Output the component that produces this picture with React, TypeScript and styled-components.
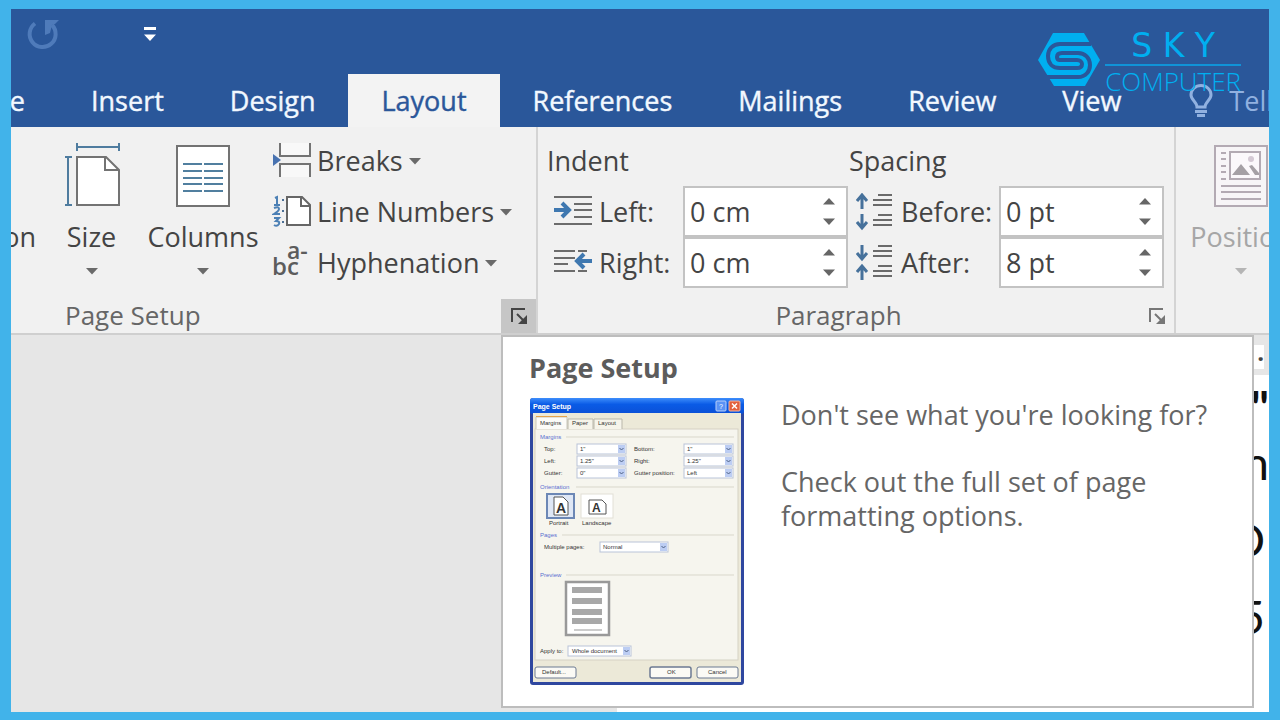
import React from "react";
import styled, { createGlobalStyle } from "styled-components";

const Global = createGlobalStyle`
  * { box-sizing: border-box; }
  body { margin: 0; font-family: "Open Sans", "Noto Sans", sans-serif; color: #444; }
  button, input { font: inherit; color: inherit; }
  button { border: 0; padding: 0; background: none; cursor: pointer; }
  h1, h2, h3, p { margin: 0; font-weight: 400; }
`;

const Frame = styled.div`
  position: relative;
  display: flex;
  flex-direction: column;
  min-height: 100vh;
  border: solid #41b3ea;
  border-width: 9px 11px 8px;
  overflow: hidden;
  background: #e6e6e6;
`;

const TitleBar = styled.header`
  display: flex;
  align-items: center;
  gap: 83px;
  height: 65px;
  padding: 0 0 16px 15px;
  background: #2a579a;
`;

const IconButton = styled.button`
  display: flex;
  align-items: center;
`;

const TabBar = styled.nav`
  display: flex;
  height: 53px;
  background: #2a579a;
  overflow: hidden;
`;

const Tab = styled.button<{ $active?: boolean }>`
  flex: none;
  padding: 0 33px;
  font-size: 27px;
  line-height: 53px;
  color: ${(p) => (p.$active ? "#2b579a" : "#f2f8ff")};
  background: ${(p) => (p.$active ? "#f3f3f3" : "transparent")};
  -webkit-text-stroke: 0.4px currentColor;
`;

const CutTab = styled(Tab)`
  display: flex;
  justify-content: flex-end;
  width: 47px;
  padding-left: 0;
  overflow: hidden;
`;

const TellMe = styled.button`
  display: flex;
  flex: none;
  align-items: center;
  gap: 15px;
  padding-left: 34px;
  font-size: 27px;
  white-space: nowrap;
  color: #91b1e0;
`;

const Brand = styled.a`
  position: absolute;
  top: 15px;
  right: 28px;
  display: flex;
  align-items: center;
  gap: 4px;
  color: #00aff0;
  text-decoration: none;
`;

const BrandWords = styled.span`
  display: flex;
  flex-direction: column;
  align-items: center;
`;

const BrandTop = styled.span`
  padding-top: 4px;
  font-family: "DejaVu Sans", sans-serif;
  font-size: 33px;
  line-height: 36px;
`;

const BrandBottom = styled.span`
  border-top: 2px solid #1093d8;
  font-weight: 300;
  font-size: 26px;
  line-height: 30px;
`;

const Ribbon = styled.section`
  position: relative;
  z-index: 1;
  display: flex;
  height: 208px;
  background: #f1f1f1;
  border-bottom: 2px solid #cfcfcf;
`;

const Group = styled.div`
  display: flex;
  flex-direction: column;
  flex: none;
  padding-top: 8px;
  border-right: 2px solid #d4d4d4;
`;

const LastGroup = styled(Group)`
  flex: 1 1 0;
  min-width: 0;
  border-right: 0;
  overflow: hidden;
`;

const GroupBody = styled.div`
  display: flex;
  height: 153px;
`;

const ParagraphBody = styled(GroupBody)`
  padding: 0 10px 0 9px;
  column-gap: 1px;
`;

const GroupFooter = styled.div`
  display: flex;
  flex: 1;
  align-items: flex-end;
  justify-content: flex-end;
`;

const GroupLabel = styled.h2<{ $center?: boolean }>`
  flex: 1;
  font-size: 26px;
  line-height: 36px;
  padding-left: ${(p) => (p.$center ? "0" : "54px")};
  text-align: ${(p) => (p.$center ? "center" : "left")};
  color: #666;
`;

const Launcher = styled.button<{ $hot?: boolean }>`
  display: flex;
  align-items: center;
  justify-content: center;
  width: 35px;
  height: 34px;
  color: ${(p) => (p.$hot ? "#444" : "#777")};
  background: ${(p) => (p.$hot ? "#c6c6c6" : "transparent")};
`;

const BigButton = styled.button<{ $width: number; $dim?: boolean }>`
  display: flex;
  flex: none;
  flex-direction: column;
  align-items: center;
  width: ${(p) => p.$width}px;
  padding-top: 8px;
  font-size: 27px;
  line-height: 36px;
  color: ${(p) => (p.$dim ? "#a6a6a6" : "#444")};

  svg:first-child { margin-bottom: 12px; }
  svg:last-child { margin-top: 12px; }
`;

const CutButton = styled.button`
  display: flex;
  flex: none;
  align-items: flex-end;
  justify-content: flex-end;
  width: 25px;
  height: 120px;
  overflow: hidden;
  font-size: 27px;
  line-height: 36px;
`;

const SmallStack = styled.div`
  display: flex;
  flex-direction: column;
  flex: none;
  width: 277px;
  padding-left: 13px;
`;

const SmallButton = styled.button`
  display: flex;
  align-items: center;
  gap: 5px;
  height: 51px;
  font-size: 27px;
  white-space: nowrap;
`;

const Fields = styled.div<{ $label: number }>`
  display: grid;
  grid-template-columns: 38px ${(p) => p.$label}px 165px;
  grid-auto-rows: 51px;
  column-gap: 7px;
  align-items: center;
  padding-left: 7px;
  font-size: 27px;
`;

const FieldsTitle = styled.h3`
  grid-column: 1 / -1;
  margin-left: -7px;
  font-size: 27px;
`;

const SpinBox = styled.div`
  display: flex;
  height: 51px;
  border: 2px solid #c3c3c3;
  background: #fff;

  input {
    flex: 1;
    min-width: 0;
    border: 0;
    padding: 0 0 0 5px;
    background: none;
    outline: 0;
  }
`;

const Spinners = styled.div`
  display: flex;
  flex-direction: column;
  justify-content: space-evenly;
  width: 34px;
  color: #666;

  button { display: flex; justify-content: center; padding: 4px 0; }
`;

const Workspace = styled.main`
  display: flex;
  flex: 1;
  padding-left: 606px;
`;

const PageColumn = styled.div`
  flex: 1;
  min-width: 0;
  padding-top: 10px;
`;

const Ruler = styled.div`
  height: 24px;
  margin-right: 5px;
  background: #fff;
  text-align: right;
  font-size: 24px;
  line-height: 26px;
  font-weight: 700;
`;

const Page = styled.article`
  height: calc(100% - 30px);
  margin-top: 6px;
  padding-top: 14px;
  background: #fff;
  color: #111;
  font-family: Lato, "Open Sans", sans-serif;
  font-size: 46px;
  text-align: right;
  overflow: hidden;
`;

const PageLine = styled.p<{ $first?: boolean; $inset?: boolean }>`
  line-height: ${(p) => (p.$first ? "35px" : "77px")};
  font-weight: ${(p) => (p.$first ? 700 : 400)};
  padding-right: ${(p) => (p.$inset ? "4px" : "0")};
  white-space: nowrap;
`;

const Tooltip = styled.div`
  position: absolute;
  top: 100%;
  left: 490px;
  width: 753px;
  height: 373px;
  margin-top: 2px;
  padding: 11px 26px;
  border: 2px solid #bdbdbd;
  background: #fff;
  color: #666;
  font-size: 27px;
`;

const TooltipTitle = styled.h2`
  font-size: 27px;
  font-weight: 700;
  line-height: 40px;
  color: #5c5c5c;
`;

const TooltipBody = styled.div`
  display: flex;
  gap: 37px;
  padding: 10px 0 0 1px;
`;

const TooltipText = styled.div`
  display: flex;
  flex-direction: column;
  gap: 33px;
  line-height: 34px;
`;

const Caret = ({ color = "#6a6a6a" }: { color?: string }) => (
  <svg width="14" height="8" viewBox="0 0 14 8" aria-hidden="true">
    <path d="M1 1h12L7 7.500z" fill={color} />
  </svg>
);

const SpinArrow = ({ up }: { up?: boolean }) => (
  <svg width="14" height="8" viewBox="0 0 14 8" aria-hidden="true">
    <path d={up ? "M1 7.500h12L7 1z" : "M1 .5h12L7 7z"} fill="#666" />
  </svg>
);

const RepeatIcon = () => (
  <svg width="34" height="32" viewBox="0 0 34 32" fill="none" stroke="#4f7bba" strokeWidth="4" aria-hidden="true">
    <path d="M9 5.500A13 13 0 1 0 26 7" />
    <path d="M19 2h14l-4 4-3 1-2 8-5 2z" fill="#4f7bba" stroke="none" />
  </svg>
);

const CustomizeIcon = () => (
  <svg width="14" height="16" viewBox="0 0 14 16" fill="#fff" aria-hidden="true">
    <path d="M1 1h12v3H1zM1 8.500h12L7 15z" />
  </svg>
);

const BulbIcon = () => (
  <svg width="26" height="34" viewBox="0 0 26 34" fill="none" stroke="#91b1e0" strokeWidth="3" aria-hidden="true">
    <path d="M9 23c0-5-6-7-6-12a10 9.500 0 0 1 20 0c0 5-6 7-6 12z" />
    <path d="M7 27.500h12M9 31.500h8" />
  </svg>
);

const BrandMark = () => (
  <svg width="64" height="56" viewBox="0 0 64 56" aria-hidden="true">
    <path d="M16 1h31l16 27-15 26H17L1 28z" fill="#00aff0" />
    <g fill="none" stroke="#2a579a" strokeWidth="4">
      <path d="M54 12H23c-7 0-12 5-12 12 0 8 5 12 12 12h17c3 0 5-1 5-4 0-2-2-4-5-4H22" />
      <path d="M8 45h33c8 0 12-6 12-12 0-7-5-12-12-12H25c-3 0-5 1-5 4 0 2 1 3 3 3" />
    </g>
  </svg>
);

const SizeIcon = () => (
  <svg width="56" height="64" viewBox="0 0 56 64" fill="none" aria-hidden="true">
    <g stroke="#4f7c9f" strokeWidth="2">
      <path d="M13 4h42M13 0v8M55 0v8M4 14v48M1 14h7M1 62h7" />
    </g>
    <path d="M13 14h29l13 13v35H13z" fill="#fff" stroke="#737373" strokeWidth="2" />
    <path d="M41 14v13h14" stroke="#737373" strokeWidth="2" />
  </svg>
);

const ColumnsIcon = () => (
  <svg width="54" height="64" viewBox="0 0 54 64" fill="none" aria-hidden="true">
    <path d="M1 3h52v60H1z" fill="#fff" stroke="#737373" strokeWidth="2" />
    <path
      d="M7 21h19M28 21h19M7 28h19M28 28h19M7 35h19M28 35h19M7 41h19M28 41h19M7 48h19M28 48h19"
      stroke="#517f9f"
      strokeWidth="2"
    />
  </svg>
);

const PositionIcon = () => (
  <svg width="54" height="64" viewBox="0 0 54 64" fill="none" stroke="#b3aab3" aria-hidden="true">
    <path d="M1 3h52v60H1z" fill="#f7f5f7" strokeWidth="2" />
    <path d="M16 9h30v27H16z" strokeWidth="2" fill="#fbf8fb" />
    <path d="M7 10h5M7 16h5M7 23h5M7 29h5M7 36h5M7 43h40M7 49h40M7 56h40" strokeWidth="2" />
    <path d="M18 32l9-11 9 11zM35 23l3-1 7 8v2h-4z" fill="#a5a0a5" stroke="none" />
    <circle cx="37" cy="16" r="3" fill="#d4c9d4" stroke="none" />
  </svg>
);

const BreaksIcon = () => (
  <svg width="40" height="36" viewBox="0 0 40 36" fill="none" aria-hidden="true">
    <path d="M8 0v13h30V0M8 34V21h30v13" fill="#f8f8f8" stroke="#737373" strokeWidth="2" />
    <path d="M1 11l8 6-8 6z" fill="#4872b0" />
  </svg>
);

const LineNumbersIcon = () => (
  <svg width="40" height="34" viewBox="0 0 40 34" fill="none" aria-hidden="true">
    <path d="M15 2h15l8 8v20H15z" fill="#fff" stroke="#666" strokeWidth="2" />
    <path d="M29 2v9h9" stroke="#666" strokeWidth="2" />
    <path d="M3 3l2-1v8M2 10h6M2 13q5-2 5 1 0 2-5 5h6M2 23h5l-3 3q4 0 3 3-2 3-5 1" stroke="#4c80b5" strokeWidth="2" />
    <path d="M10 5h2M10 16h2M10 27h2" stroke="#4c6f95" strokeWidth="2" />
  </svg>
);

const HyphenationIcon = () => (
  <svg width="40" height="36" viewBox="0 0 40 36" fill="#5c5c5c" aria-hidden="true">
    <g fontFamily="Open Sans, sans-serif" fontWeight="600">
      <text x="0" y="30" fontSize="24">bc</text>
      <text x="15" y="14" fontSize="23">a-</text>
    </g>
  </svg>
);

const IndentIcon = ({ right }: { right?: boolean }) => (
  <svg width="38" height="32" viewBox="0 0 38 32" fill="none" aria-hidden="true">
    {right ? (
      <>
        <path d="M0 4h21M24 4h9M0 11h21M0 17h14M0 24h21M24 24h9" stroke="#6c6c6c" strokeWidth="2" />
        <path d="M38 14H24M30 7l-7 7 7 7" stroke="#3f78b0" strokeWidth="4" />
      </>
    ) : (
      <>
        <path d="M0 1h38M20 8h18M20 14h18M20 21h18M0 28h38" stroke="#6c6c6c" strokeWidth="2" />
        <path d="M0 14h14M8 7l7 7-7 7" stroke="#3f78b0" strokeWidth="4" />
      </>
    )}
  </svg>
);

const SpacingIcon = ({ after }: { after?: boolean }) => (
  <svg width="38" height="38" viewBox="0 0 38 38" fill="none" aria-hidden="true">
    <path d="M22 2h14M17 7h19M17 12h19M22 22h14M17 27h19M17 32h19" stroke="#6a6a6a" strokeWidth="2" />
    <path
      d={
        after
          ? "M6 1v14M1 9l5 6 5-6M6 36V22M1 28l5-6 5 6"
          : "M6 16V2M1 8l5-6 5 6M6 21v14M1 29l5 6 5-6"
      }
      stroke="#46719b"
      strokeWidth="3"
    />
  </svg>
);

const LauncherIcon = () => (
  <svg width="18" height="18" viewBox="0 0 18 18" fill="none" stroke="currentColor" strokeWidth="2" aria-hidden="true">
    <path d="M2 15V2h13M7 7l7 7" />
    <path d="M17 8v9H8z" fill="currentColor" stroke="none" />
  </svg>
);

const thumbLabels: [number, number, string][] = [
  [10, 27, "Margins"], [42, 27, "Paper"], [68, 27, "Layout"],
  [14, 53, "Top:"], [14, 65, "Left:"], [14, 77, "Gutter:"],
  [104, 53, "Bottom:"], [104, 65, "Right:"], [104, 77, "Gutter position:"],
  [50, 53, "1\""], [50, 65, "1.25\""], [50, 77, "0\""],
  [157, 53, "1\""], [157, 65, "1.25\""], [157, 77, "Left"],
  [19, 127, "Portrait"], [52, 127, "Landscape"],
  [14, 151, "Multiple pages:"], [73, 151, "Normal"],
  [10, 255, "Apply to:"], [42, 255, "Whole document"],
  [12, 276, "Default..."], [137, 276, "OK"], [178, 276, "Cancel"],
];

const thumbHeads: [number, number, string, number][] = [
  [10, 41, "Margins", 36], [10, 91, "Orientation", 46], [10, 139, "Pages", 32], [10, 179, "Preview", 36],
];

const thumbBoxes: [number, number, number][] = [
  [47, 46, 49], [47, 58, 49], [47, 70, 49], [154, 46, 49], [154, 58, 49], [154, 70, 49], [70, 144, 68], [38, 248, 63],
];

const DialogPicture = () => (
  <svg width="214" height="287" viewBox="0 0 214 287" role="img" aria-label="Page Setup dialog">
    <defs>
      <linearGradient id="bar" x1="0" y1="0" x2="0" y2="1">
        <stop offset="0" stopColor="#3d8dfb" />
        <stop offset="0.400" stopColor="#0a5be6" />
        <stop offset="1" stopColor="#0b50d6" />
      </linearGradient>
    </defs>
    <rect width="214" height="287" rx="3" fill="#2f479f" />
    <rect width="214" height="16" rx="3" fill="url(#bar)" />
    <rect x="3" y="15" width="208" height="269" fill="#ece9d8" />
    <rect x="5" y="31" width="203" height="231" fill="#f6f5ee" stroke="#d5d2c4" />
    <path d="M6 31V19h31v12" fill="#fcfbf7" stroke="#c9c7ba" />
    <path d="M6 18.500h31" stroke="#e5a34b" />
    <path d="M38 31V21h25v10M64 31V21h28v10" fill="#f6f4ea" stroke="#b9b7aa" />
    <rect x="186" y="3" width="10" height="10" rx="1" fill="#5b93f5" stroke="#b9d0fa" />
    <rect x="199" y="3" width="11" height="10" rx="1" fill="#e2603d" stroke="#f2b9a6" />
    <path d="M202 5.500l5 5M207 5.500l-5 5" stroke="#fff" strokeWidth="1.500" />
    <g fontFamily="Liberation Sans, sans-serif" fontSize="7">
      <text x="3" y="11" fill="#fff" fontWeight="700">Page Setup</text>
      <text x="189" y="11" fill="#fff">?</text>
      {thumbHeads.map(([x, y, t, w]) => (
        <g key={t}>
          <text x={x} y={y} fill="#5a6fd0" fontSize="6">{t}</text>
          <path d={`M${w} ${y - 2}H204`} stroke="#d9d7cb" />
        </g>
      ))}
      {thumbBoxes.map(([x, y, w]) => (
        <g key={`${x}-${y}`}>
          <rect x={x} y={y} width={w} height="10" fill="#fff" stroke="#b9c4d8" />
          <rect x={x + w - 8} y={y + 1} width="7" height="8" fill="#bccdf3" />
          <path d={`M${x + w - 6.5} ${y + 4}l2 2 2-2`} stroke="#4d6185" fill="none" />
        </g>
      ))}
      <rect x="17" y="96" width="27" height="24" fill="#dfe7f5" stroke="#6c87b5" strokeWidth="2" />
      <rect x="51" y="96" width="32" height="24" fill="#fff" stroke="#e2e0d6" />
      <path d="M24 99h9l5 5v13H24zM59 102h13l4 4v10H59z" fill="#fff" stroke="#555" />
      <text x="26" y="115" fontSize="14" fontWeight="700" fill="#333">A</text>
      <text x="62" y="114" fontSize="12" fontWeight="700" fill="#333">A</text>
      <rect x="36" y="184" width="43" height="53" fill="#fff" stroke="#999" strokeWidth="2.500" />
      <path d="M42 192h30M42 203h30M42 214h30M42 223h30" stroke="#a8a8a8" strokeWidth="6" />
      <path d="M44 232h28" stroke="#999" />
      <g fill="#fbfaf5" stroke="#6c7a92">
        <rect x="5" y="269" width="41" height="11" rx="2" />
        <rect x="120" y="269" width="41" height="11" rx="2" strokeWidth="1.500" />
        <rect x="167" y="269" width="41" height="11" rx="2" />
      </g>
      {thumbLabels.map(([x, y, t]) => (
        <text key={`${x}-${y}`} x={x} y={y} fontSize="6" fill="#333">{t}</text>
      ))}
    </g>
  </svg>
);

function SpinField({ id, label, value, icon }: { id: string; label: string; value: string; icon: React.ReactNode }) {
  return (
    <>
      {icon}
      <label htmlFor={id}>{label}</label>
      <SpinBox>
        <input id={id} defaultValue={value} />
        <Spinners>
          <button aria-label={`Increase ${label}`}><SpinArrow up /></button>
          <button aria-label={`Decrease ${label}`}><SpinArrow /></button>
        </Spinners>
      </SpinBox>
    </>
  );
}

export default function App() {
  return (
    <Frame>
      <Global />
      <TitleBar>
        <IconButton aria-label="Repeat"><RepeatIcon /></IconButton>
        <IconButton aria-label="Customize Quick Access Toolbar"><CustomizeIcon /></IconButton>
      </TitleBar>
      <TabBar>
        <CutTab>Home</CutTab>
        <Tab>Insert</Tab>
        <Tab>Design</Tab>
        <Tab $active>Layout</Tab>
        <Tab>References</Tab>
        <Tab>Mailings</Tab>
        <Tab>Review</Tab>
        <Tab>View</Tab>
        <TellMe><BulbIcon />Tell me</TellMe>
      </TabBar>
      <Ribbon>
        <Group>
          <GroupBody>
            <CutButton>Orientation</CutButton>
            <BigButton $width={111}><SizeIcon />Size<Caret /></BigButton>
            <BigButton $width={112}><ColumnsIcon />Columns<Caret /></BigButton>
            <SmallStack>
              <SmallButton><BreaksIcon />Breaks<Caret /></SmallButton>
              <SmallButton><LineNumbersIcon />Line Numbers<Caret /></SmallButton>
              <SmallButton><HyphenationIcon />Hyphenation<Caret /></SmallButton>
            </SmallStack>
          </GroupBody>
          <GroupFooter>
            <GroupLabel>Page Setup</GroupLabel>
            <Launcher $hot aria-label="Page Setup options"><LauncherIcon /></Launcher>
          </GroupFooter>
        </Group>
        <Group>
          <ParagraphBody>
            <Fields $label={77}>
              <FieldsTitle>Indent</FieldsTitle>
              <SpinField id="left" label="Left:" value="0 cm" icon={<IndentIcon />} />
              <SpinField id="right" label="Right:" value="0 cm" icon={<IndentIcon right />} />
            </Fields>
            <Fields $label={91}>
              <FieldsTitle>Spacing</FieldsTitle>
              <SpinField id="before" label="Before:" value="0 pt" icon={<SpacingIcon />} />
              <SpinField id="after" label="After:" value="8 pt" icon={<SpacingIcon after />} />
            </Fields>
          </ParagraphBody>
          <GroupFooter>
            <GroupLabel $center>Paragraph</GroupLabel>
            <Launcher aria-label="Paragraph options"><LauncherIcon /></Launcher>
          </GroupFooter>
        </Group>
        <LastGroup>
          <GroupBody>
            <BigButton $width={130} $dim><PositionIcon />Position<Caret color="#b5b5b5" /></BigButton>
          </GroupBody>
        </LastGroup>
        <Tooltip role="tooltip">
          <TooltipTitle>Page Setup</TooltipTitle>
          <TooltipBody>
            <DialogPicture />
            <TooltipText>
              <p>Don't see what you're looking for?</p>
              <p>Check out the full set of page<br />formatting options.</p>
            </TooltipText>
          </TooltipBody>
        </Tooltip>
      </Ribbon>
      <Workspace>
        <PageColumn>
          <Ruler>·</Ruler>
          <Page>
            <PageLine $first>"</PageLine>
            <PageLine>n</PageLine>
            <PageLine $inset>O</PageLine>
            <PageLine $inset>5</PageLine>
          </Page>
        </PageColumn>
      </Workspace>
      <Brand href="#">
        <BrandMark />
        <BrandWords>
          <BrandTop>S K Y</BrandTop>
          <BrandBottom>COMPUTER</BrandBottom>
        </BrandWords>
      </Brand>
    </Frame>
  );
}
